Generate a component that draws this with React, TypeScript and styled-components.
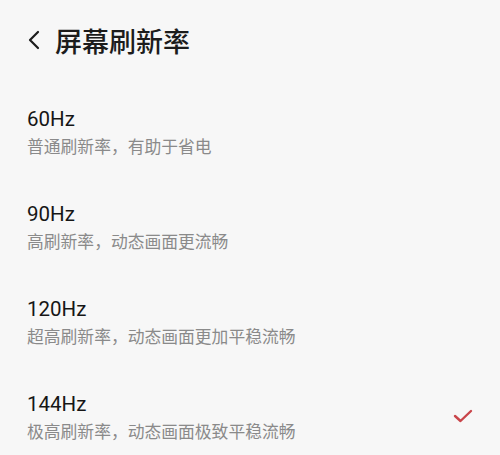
import styled, { createGlobalStyle } from 'styled-components';

const GlobalStyle = createGlobalStyle`
  html, body {
    margin: 0;
    padding: 0;
    background: #f7f7f7;
  }
  body {
    font-family: "Noto Sans", "Noto Sans CJK SC", sans-serif;
  }
`

const Page = styled.div`
  width: 500px;
  height: 455px;
  overflow: hidden;
  background: #f7f7f7;
`

const Header = styled.div`
  display: flex;
  align-items: center;
  height: 80px;
  padding-left: 27px;
  gap: 14px;
`

const BackIcon = styled.svg`
  width: 14px;
  height: 20px;
  flex-shrink: 0;
`

const Title = styled.h1`
  margin: 0;
  font-family: "Noto Sans CJK SC", sans-serif;
  font-size: 27px;
  font-weight: 500;
  color: #1c1c1c;
  line-height: 1;
`

const List = styled.div`
  display: flex;
  flex-direction: column;
`

const Row = styled.div`
  display: flex;
  align-items: flex-start;
  height: 95px;
  box-sizing: border-box;
  padding: 27px 27px 0;
`

const Texts = styled.div`
  flex: 1;
  display: flex;
  flex-direction: column;
  gap: 4px;
`

const Rate = styled.div`
  font-family: Roboto, sans-serif;
  font-size: 20.5px;
  color: #161616;
  line-height: 24px;
`

const Hint = styled.div`
  font-family: "Noto Sans CJK SC", sans-serif;
  font-size: 16.8px;
  color: #8a8a8a;
  line-height: 22px;
`

const Check = styled.svg<{ $on: boolean }>`
  width: 20px;
  height: 14px;
  margin-top: 17px;
  visibility: ${p => (p.$on ? 'visible' : 'hidden')};
`

const rates = [
  { hz: '60Hz', hint: '普通刷新率，有助于省电' },
  { hz: '90Hz', hint: '高刷新率，动态画面更流畅' },
  { hz: '120Hz', hint: '超高刷新率，动态画面更加平稳流畅' },
  { hz: '144Hz', hint: '极高刷新率，动态画面极致平稳流畅' },
];

const selected = '144Hz';

const App = () => {
  return (
    <>
      <GlobalStyle />
      <Page>
        <Header>
          <BackIcon viewBox="0 0 14 20">
            <path d="M11 2 L3 10 L11 18" fill="none" stroke="#1c1c1c" strokeWidth="2.2" strokeLinecap="round" strokeLinejoin="round" />
          </BackIcon>
          <Title>屏幕刷新率</Title>
        </Header>
        <List>
          {rates.map(r => (
            <Row key={r.hz}>
              <Texts>
                <Rate>{r.hz}</Rate>
                <Hint>{r.hint}</Hint>
              </Texts>
              <Check viewBox="0 0 20 14" $on={r.hz === selected}>
                <path d="M2 7 L7.5 12 L18 2" fill="none" stroke="#c9454a" strokeWidth="2.4" strokeLinecap="round" strokeLinejoin="round" />
              </Check>
            </Row>
          ))}
        </List>
      </Page>
    </>
  );
}

export default App;
